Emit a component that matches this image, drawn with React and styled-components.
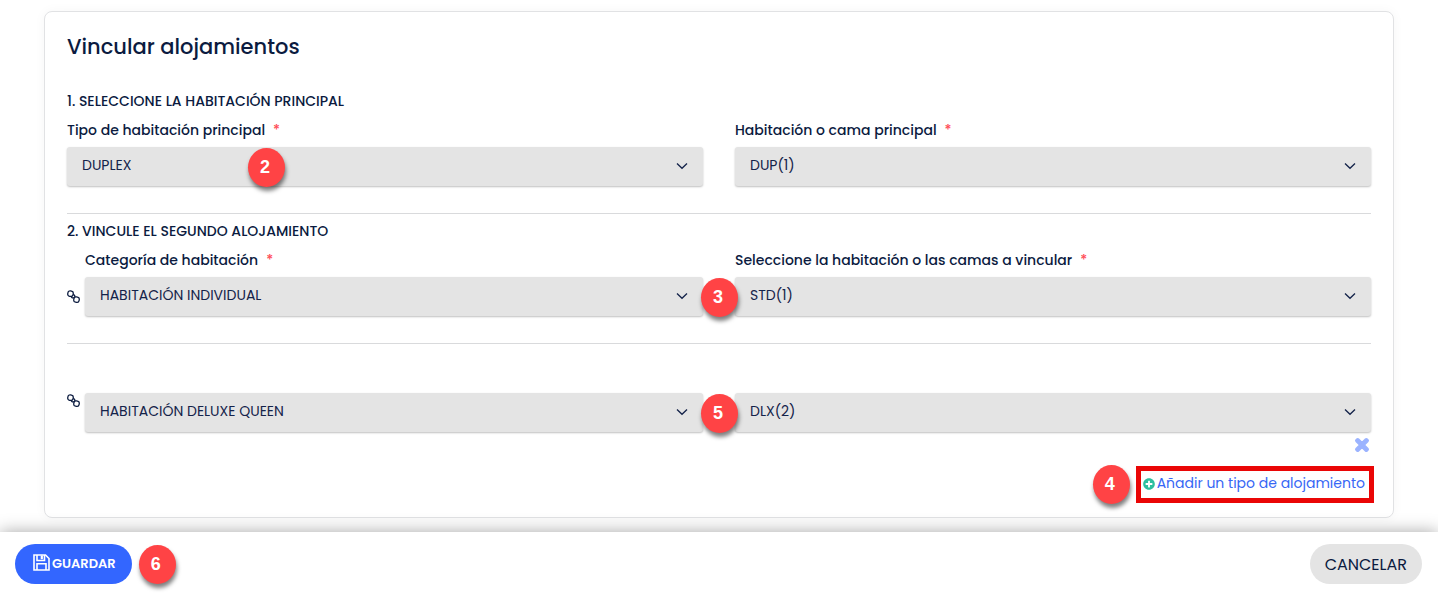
import React from 'react';
import styled, { createGlobalStyle } from 'styled-components';
import { FaPlusCircle, FaTimes } from 'react-icons/fa';

const LinkIcon = () => (
  <svg width="13" height="14" viewBox="0 0 13 14" fill="none" stroke="#0b1b3f" strokeWidth="1.300" aria-hidden="true">
    <rect x="0.800" y="1" width="5.400" height="5.400" rx="2.200" transform="rotate(10 3.500 3.700)" />
    <rect x="6.800" y="6.900" width="5.400" height="5.400" rx="2.200" transform="rotate(10 9.500 9.600)" />
    <path d="M4.300 6.300c.3 1.500 1.500 2 2.900 1.400M6.100 4.600c1.300.1 2 1.100 1.700 2.500" />
  </svg>
);

const SaveIcon = () => (
  <svg width="17" height="17" viewBox="0 0 17 17" fill="none" stroke="#fff" strokeWidth="1.600" aria-hidden="true">
    <path d="M1 1h11.500L16 4.500V16H1z" />
    <path d="M4 1v5.500h7.500V1M4 16V9.800h9V16" />
    <path d="M8.800 1.500v3.700" strokeWidth="2.200" />
  </svg>
);

const Chevron = () => (
  <svg width="12" height="8" viewBox="0 0 12 8" fill="none" stroke="#14234a" strokeWidth="1.300" aria-hidden="true">
    <path d="M1 1.500l5 4.800 5-4.800" />
  </svg>
);

const Field = ({ id, label, hidden, value, children }) => (
  <FieldBox>
    {!hidden && <Label htmlFor={id}>{label}<Required>*</Required></Label>}
    <SelectBox>
      <Select id={id} defaultValue={value} aria-label={hidden ? label : undefined}>
        <option>{value}</option>
      </Select>
      <Chevron />
      {children}
    </SelectBox>
  </FieldBox>
);

const App = () => (
  <Page>
    <GlobalStyle />
    <Main>
      <Card>
        <Title>Vincular alojamientos</Title>
        <Section>
          <SectionTitle>1. SELECCIONE LA HABITACIÓN PRINCIPAL</SectionTitle>
          <Row>
            <Field id="main-type" label="Tipo de habitación principal" value="DUPLEX">
              <FloatingStep $left="181px">2</FloatingStep>
            </Field>
            <Field id="main-room" label="Habitación o cama principal" value="DUP(1)" />
          </Row>
        </Section>
        <Section>
          <SectionTitle>2. VINCULE EL SEGUNDO ALOJAMIENTO</SectionTitle>
          <Row>
            <Linked>
              <LinkMark $top="39px"><LinkIcon /></LinkMark>
              <Field id="second-type" label="Categoría de habitación" value="HABITACIÓN INDIVIDUAL">
                <FloatingStep $left="calc(100% - 2px)">3</FloatingStep>
              </Field>
            </Linked>
            <Field id="second-room" label="Seleccione la habitación o las camas a vincular" value="STD(1)" />
          </Row>
        </Section>
        <ExtraRow>
          <Linked>
            <LinkMark $top="0"><LinkIcon /></LinkMark>
            <Field id="third-type" hidden label="Categoría de habitación" value="HABITACIÓN DELUXE QUEEN">
              <FloatingStep $left="calc(100% - 2px)">5</FloatingStep>
            </Field>
          </Linked>
          <Field id="third-room" hidden label="Seleccione la habitación o las camas a vincular" value="DLX(2)" />
        </ExtraRow>
        <RemoveButton type="button" aria-label="Eliminar">
          <FaTimes size={18} stroke="currentColor" strokeWidth="45" />
        </RemoveButton>
        <AddRow>
          <Step>4</Step>
          <Highlight>
            <AddLink href="#add"><FaPlusCircle size={12} color="#2dbf9f" />Añadir un tipo de alojamiento</AddLink>
          </Highlight>
        </AddRow>
      </Card>
    </Main>
    <Footer>
      <SaveButton type="button"><SaveIcon />GUARDAR</SaveButton>
      <Step>6</Step>
      <CancelButton type="button">CANCELAR</CancelButton>
    </Footer>
  </Page>
);

const GlobalStyle = createGlobalStyle`
  * {
    box-sizing: border-box;
  }
  body {
    margin: 0;
    background: #fff;
    color: #0b1b3f;
    font-family: Poppins, Inter, sans-serif;
    font-size: 14px;
  }
  button, select {
    font-family: inherit;
  }
`;

const Page = styled.div`
  display: flex;
  flex-direction: column;
  min-height: 100vh;
`;

const Main = styled.main`
  flex: 1;
  padding: 11px 44px 14px;
`;

const Card = styled.div`
  background: #fff;
  border: 1px solid #e1e2e4;
  border-radius: 8px;
  box-shadow: 0 0 12px rgba(0, 0, 0, 0.04);
  padding: 20px 22px 13px;
`;

const Title = styled.h1`
  margin: 0 0 29px;
  font-size: 21px;
  font-weight: 500;
  line-height: 30px;
`;

const Section = styled.section`
  border-bottom: 1px solid #d9dadc;
  padding-bottom: 27px;
  margin-bottom: 7px;
`;

const SectionTitle = styled.h2`
  margin: 0 0 9px;
  font-size: 14px;
  font-weight: 500;
  line-height: 20px;
`;

const Row = styled.div`
  display: grid;
  grid-template-columns: 1fr 1fr;
  column-gap: 32px;
`;

const ExtraRow = styled(Row)`
  padding-top: 42px;
`;

const Linked = styled.div`
  display: flex;
`;

const LinkMark = styled.span`
  flex: none;
  width: 18px;
  padding-top: ${({ $top }) => $top};
`;

const FieldBox = styled.div`
  flex: 1;
`;

const Label = styled.label`
  display: block;
  margin-bottom: 7px;
  font-size: 14px;
  font-weight: 500;
  line-height: 20px;
`;

const Required = styled.span`
  margin-left: 8px;
  color: #ff4b55;
`;

const SelectBox = styled.div`
  position: relative;
  > svg {
    position: absolute;
    right: 15px;
    top: 15px;
    pointer-events: none;
  }
`;

const Select = styled.select`
  display: block;
  appearance: none;
  width: 100%;
  height: 39px;
  padding: 0 40px 3px 15px;
  border: 0;
  border-radius: 3px;
  background: #e4e4e4;
  box-shadow: 0 1px 2px rgba(0, 0, 0, 0.25);
  color: #14234a;
  font-size: 14px;
`;

const Step = styled.span`
  display: flex;
  align-items: center;
  justify-content: center;
  flex: none;
  width: 37px;
  height: 39px;
  padding-right: 3px;
  border-radius: 50%;
  background: #ff4345;
  box-shadow: 1px 4px 4px rgba(0, 0, 0, 0.5);
  color: #fff;
  font-family: "Liberation Sans", Arial, sans-serif;
  font-size: 18px;
  font-weight: 700;
`;

const FloatingStep = styled(Step)`
  position: absolute;
  z-index: 1;
  top: 1px;
  left: ${({ $left }) => $left};
`;

const RemoveButton = styled.button`
  display: block;
  margin: 4px 0 11px auto;
  padding: 0;
  border: 0;
  background: none;
  color: #9bb3ff;
  line-height: 0;
`;

const AddRow = styled.div`
  display: flex;
  justify-content: flex-end;
  align-items: center;
  gap: 6px;
  margin-right: -3px;
`;

const Highlight = styled.div`
  border: 5px solid #ea0606;
  padding: 2px 4px 4px 2px;
`;

const AddLink = styled.a`
  display: flex;
  align-items: center;
  gap: 2px;
  color: #3767f5;
  font-size: 14px;
  line-height: 21px;
  text-decoration: none;
`;

const Footer = styled.footer`
  position: relative;
  display: flex;
  align-items: center;
  gap: 7px;
  height: 62px;
  padding: 2px 16px 0 15px;
  background: #fff;
  box-shadow: 0 0 16px rgba(0, 0, 0, 0.35);
`;

const SaveButton = styled.button`
  display: flex;
  align-items: center;
  gap: 2px;
  height: 40px;
  padding: 0 16px 0 18px;
  border: 0;
  border-radius: 20px;
  background: #3366ff;
  color: #fff;
  font-size: 13px;
  font-weight: 600;
  svg {
    margin-bottom: 3px;
  }
`;

const CancelButton = styled.button`
  height: 40px;
  margin-left: auto;
  padding: 0 15px;
  border: 0;
  border-radius: 20px;
  background: #e4e4e4;
  color: #0b1b3f;
  font-size: 16px;
`;

export default App;
